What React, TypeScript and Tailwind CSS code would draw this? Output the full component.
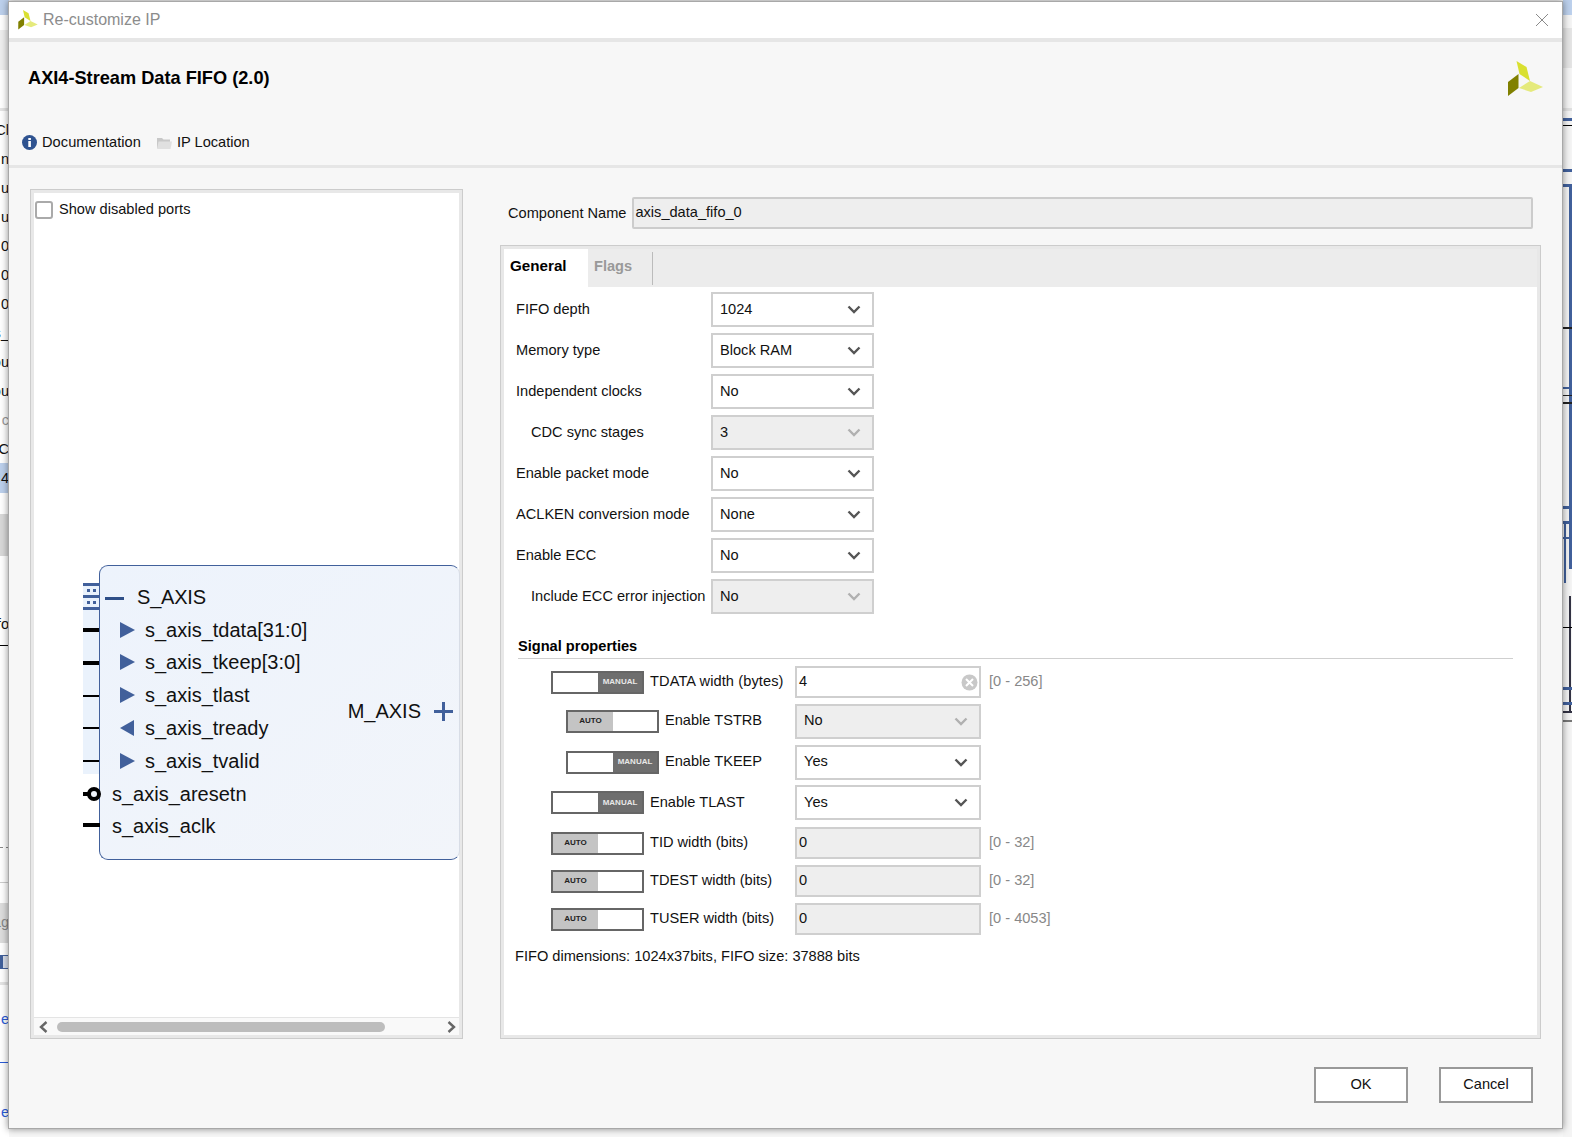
const font = "font-['Liberation_Sans',Arial,sans-serif]";

const XilinxLogo = ({ className }: { className: string }) => (
  <svg viewBox="0 0 35 36" className={className}>
    <polygon points="8.5,0 18.5,6 22,20 11.5,13" fill="#d9e030" />
    <polygon points="0,21 10.5,13 10.5,27 0,35" fill="#808000" />
    <polygon points="11,27 22,20 35,26 23,31" fill="#e5ea7c" />
  </svg>
);

const Chevron = ({ disabled }: { disabled?: boolean }) => (
  <svg width="14" height="9" viewBox="0 0 14 9" className="shrink-0">
    <path d="M1.5 1.5 L7 7 L12.5 1.5" fill="none" stroke={disabled ? "#b0b0b0" : "#555555"} strokeWidth="2.4" />
  </svg>
);

const Select = ({ value, disabled, className }: { value: string; disabled?: boolean; className: string }) => (
  <div
    className={`flex items-center justify-between border-2 border-[#cfcfcf] pl-[7px] pr-[11px] text-[14.6px] text-[#111] ${
      disabled ? "bg-[#eeeeee]" : "bg-white"
    } ${className}`}
  >
    <span>{value}</span>
    <Chevron disabled={disabled} />
  </div>
);

const Toggle = ({ manual }: { manual?: boolean }) => (
  <div className="flex h-[23px] w-[93px] shrink-0 border-2 border-[#666666] bg-white">
    {manual ? (
      <>
        <div className="w-[45px]" />
        <div className="flex flex-1 items-center justify-center bg-[#6e6e6e] text-[8px] font-bold text-[#e8e8e8]">MANUAL</div>
      </>
    ) : (
      <>
        <div className="flex w-[45px] items-center justify-center bg-[#c4c4c4] text-[8px] font-bold text-[#222]">AUTO</div>
        <div className="flex-1" />
      </>
    )}
  </div>
);

const topRows = [
  { label: "FIFO depth", value: "1024" },
  { label: "Memory type", value: "Block RAM" },
  { label: "Independent clocks", value: "No" },
  { label: "CDC sync stages", value: "3", disabled: true, indent: true },
  { label: "Enable packet mode", value: "No" },
  { label: "ACLKEN conversion mode", value: "None" },
  { label: "Enable ECC", value: "No" },
  { label: "Include ECC error injection", value: "No", disabled: true, indent: true },
];

const ports = [
  { name: "s_axis_tdata[31:0]", pin: "h-[4px]", dir: "right" },
  { name: "s_axis_tkeep[3:0]", pin: "h-[4px]", dir: "right" },
  { name: "s_axis_tlast", pin: "h-[2px]", dir: "right" },
  { name: "s_axis_tready", pin: "h-[2px]", dir: "left" },
  { name: "s_axis_tvalid", pin: "h-[2px]", dir: "right" },
];

const Arrow = ({ dir }: { dir: string }) => (
  <svg width="15" height="16" viewBox="0 0 15 16" className="shrink-0">
    <polygon points={dir === "right" ? "0,0 15,8 0,16" : "14,0 14,16 0,8"} fill="#41609b" />
  </svg>
);

const BlockDiagram = () => (
  <div className="absolute left-[49px] top-[372px] h-[295px] w-[377px]">
    {/* bus highlight and pins stick out on the left of the block */}
    <div className="absolute left-0 top-[18px] h-[191px] w-[17px] bg-[#eaf2fc]" />
    <div className="absolute left-0 top-[18px] flex h-[27px] w-[17px] flex-col justify-between">
      <div className="h-[3px] bg-[#41609b]" />
      <div className="flex justify-around px-[2px]"><span className="size-[3px] bg-[#41609b]" /><span className="size-[3px] bg-[#41609b]" /></div>
      <div className="h-[3px] bg-[#41609b]" />
      <div className="flex justify-around px-[2px]"><span className="size-[3px] bg-[#41609b]" /><span className="size-[3px] bg-[#41609b]" /></div>
      <div className="h-[3px] bg-[#41609b]" />
    </div>
    {ports.map((p, i) => (
      <div key={p.name} className={`absolute left-0 w-[17px] -translate-y-1/2 bg-black ${p.pin}`} style={{ top: 65 + i * 32.8 }} />
    ))}
    <div className="absolute left-0 top-[227px] h-[4px] w-[8px] bg-black" />

    <div className="absolute inset-y-0 left-[16px] right-0 rounded-[9px] border border-[#41609b] border-r-[#d8dde6] bg-gradient-to-br from-[#edf3fc] to-[#f2f5fa] text-[20px] leading-none text-[#111]">
      <div className="absolute left-[5px] top-[31px] h-[3px] w-[19px] bg-[#2f4f88]" />
      <div className="pl-[37px] pt-[21px] tracking-[-0.2px]">S_AXIS</div>
      <div className="mt-[12.6px] flex flex-col gap-[12.8px] pl-[20px]">
        {ports.map((p) => (
          <div key={p.name} className="flex h-[20px] items-center gap-[10px]">
            <Arrow dir={p.dir} />
            <span>{p.name}</span>
          </div>
        ))}
      </div>
      <div className="mt-[12.8px] flex flex-col gap-[12.6px] pl-[12px]">
        <div className="h-[20px]">s_axis_aresetn</div>
        <div className="h-[20px]">s_axis_aclk</div>
      </div>
      <div className="absolute right-[6px] top-[135px] flex items-center gap-[13px]">
        <span>M_AXIS</span>
        <svg width="19" height="19" viewBox="0 0 19 19"><path d="M9.5 0V19M0 9.5H19" stroke="#41609b" strokeWidth="3" /></svg>
      </div>
    </div>
    <div className="absolute left-[4px] top-[222px] z-10 size-[14px] rounded-full border-[4px] border-black bg-[#eff4fb]" />
    <div className="absolute left-0 top-[258px] h-[4px] w-[17px] bg-black" />
  </div>
);

const leftBits = [
  { t: "Cl", y: 122 }, { t: "n", y: 151 }, { t: "u", y: 180 }, { t: "u", y: 209 }, { t: "0", y: 238 },
  { t: "0", y: 267 }, { t: "0", y: 296 }, { t: "s_", y: 325 }, { t: "ou", y: 354 }, { t: "ou", y: 383 },
  { t: "C", y: 441 }, { t: "I4", y: 470 }, { t: "fo", y: 616 },
];

const rightLines = [
  { y: 118, c: "bg-[#41609b] h-[3px]" }, { y: 125, c: "bg-black h-px" }, { y: 169, c: "bg-[#41609b] h-[3px]" },
  { y: 184, c: "bg-[#41609b] h-[3px]" }, { y: 327, c: "bg-[#222] h-[2px]" }, { y: 387, c: "bg-[#41609b] h-[2px]" },
  { y: 395, c: "bg-[#222] h-px" }, { y: 402, c: "bg-[#222] h-[2px]" }, { y: 506, c: "bg-[#41609b] h-[3px]" },
  { y: 521, c: "bg-[#41609b] h-[3px]" }, { y: 537, c: "bg-[#41609b] h-[2px]" }, { y: 627, c: "bg-black h-px" },
  { y: 687, c: "bg-[#41609b] h-[3px]" }, { y: 702, c: "bg-[#41609b] h-[3px]" }, { y: 711, c: "bg-[#334] h-[2px]" },
  { y: 720, c: "bg-[#777] h-[2px]" },
];

export default function App() {
  return (
    <div className={`relative h-[1137px] w-[1572px] overflow-hidden bg-[#f7f7f7] text-[14.6px] text-[#111] ${font}`}>
      {/* main window peeking out behind the dialog */}
      <div className="absolute inset-y-0 left-0 w-[9px] overflow-hidden bg-white">
        <div className="absolute left-0 top-0 h-[15px] w-full bg-[#bcd0ec]" />
        <div className="absolute left-0 top-[30px] h-[40px] w-full bg-[#eeeeee]" />
        <div className="absolute left-0 top-[108px] h-[3px] w-full bg-[#e4e4e4]" />
        <div className="absolute left-0 top-[463px] h-[30px] w-full bg-[#bcd0ec]" />
        <div className="absolute left-0 top-[514px] h-[42px] w-full bg-[#d8d8d8]" />
        <div className="absolute left-0 top-[645px] h-px w-full bg-black" />
        <div className="absolute left-0 top-[847px] w-full border-t border-dashed border-[#888]" />
        <div className="absolute left-0 top-[882px] h-px w-full bg-[#ccc]" />
        <div className="absolute left-0 top-[903px] h-[40px] w-full bg-[#dddddd]" />
        <div className="absolute left-0 top-[955px] h-[14px] w-[2px] bg-[#41609b]" />
        <div className="absolute left-[2px] top-[955px] h-[14px] w-[7px] border border-[#41609b] bg-[#d8deea]" />
        <div className="absolute left-0 top-[982px] h-[3px] w-full bg-[#e4e4e4]" />
        <div className="absolute left-0 top-[1062px] h-px w-full bg-[#2a5bd7]" />
        {leftBits.map((b) => (
          <span key={b.y} className="absolute right-0 leading-[17px]" style={{ top: b.y }}>{b.t}</span>
        ))}
        <span className="absolute right-0 top-[412px] leading-[17px] text-[#999]">c</span>
        <span className="absolute right-0 top-[914px] leading-[17px] text-[#888]">ag</span>
        <span className="absolute right-0 top-[1011px] leading-[17px] text-[#2a5bd7]">e</span>
        <span className="absolute right-0 top-[1104px] leading-[17px] text-[#2a5bd7]">e</span>
      </div>
      <div className="absolute inset-y-0 right-0 w-[9px] overflow-hidden bg-[#f4f4f4]">
        <div className="absolute left-0 top-0 h-[15px] w-full bg-[#bcd0ec]" />
        <div className="absolute left-0 top-[28px] h-[40px] w-full bg-[#e4e4e4]" />
        <div className="absolute left-0 top-[108px] h-[3px] w-full bg-[#e0e0e0]" />
        <div className="absolute left-[6px] top-[184px] h-[385px] w-[3px] bg-[#41609b]" />
        <div className="absolute left-[1px] top-[521px] h-[62px] w-[2px] bg-[#41609b]" />
        <div className="absolute left-[6px] top-[596px] h-[115px] w-[2px] bg-[#334]" />
        {rightLines.map((l) => (
          <div key={l.y} className={`absolute left-0 w-full ${l.c}`} style={{ top: l.y }} />
        ))}
      </div>

      {/* dialog */}
      <div className="absolute left-[8px] top-px flex h-[1128px] w-[1555px] flex-col border border-[#a8a8a8] bg-[#f7f7f7] shadow-[0_0_7px_rgba(0,0,0,0.45)]">
        <div className="flex h-[36px] shrink-0 items-center justify-between bg-white pl-[9px] pr-[13px]">
          <div className="flex items-center gap-[5px]">
            <XilinxLogo className="h-[20px] w-[20px]" />
            <span className="text-[16px] text-[#8c8c8c]">Re-customize IP</span>
          </div>
          <svg width="14" height="14" viewBox="0 0 14 14"><path d="M1 1L13 13M13 1L1 13" stroke="#8a8a8a" strokeWidth="1" /></svg>
        </div>
        <div className="h-[4px] shrink-0 bg-[#e6e6e6]" />

        <div className="flex h-[123px] shrink-0 flex-col pl-[19px] pr-[19px]">
          <div className="flex items-start justify-between">
            <h1 className="mt-[26px] text-[18.2px] font-bold leading-[20px] text-black">AXI4-Stream Data FIFO (2.0)</h1>
            <XilinxLogo className="mt-[19px] h-[36px] w-[35px]" />
          </div>
          <div className="mt-[35px] flex items-center">
            <svg width="15" height="15" viewBox="0 0 15 15" className="ml-[-6px] mr-[5px]">
              <circle cx="7.5" cy="7.5" r="7.5" fill="#2f5390" />
              <rect x="6.3" y="6" width="2.6" height="6" fill="#fff" />
              <rect x="6.3" y="3" width="2.6" height="2" fill="#fff" />
            </svg>
            <span className="tracking-[0.06px]">Documentation</span>
            <svg width="15" height="13" viewBox="0 0 15 13" className="ml-[16px] mr-[5px]">
              <path d="M0 2H5L6.5 3.5H13V12H0Z" fill="#c8c8c8" />
              <path d="M1.5 5.5H15L13.5 13H0Z" fill="#e0e0e0" />
            </svg>
            <span>IP Location</span>
          </div>
        </div>
        <div className="h-[3px] shrink-0 bg-[#e6e6e6]" />

        <div className="flex min-h-0 flex-1 pl-[21px] pr-[21px] pt-[21px]">
          {/* left symbol panel */}
          <div className="relative flex h-[850px] w-[433px] shrink-0 flex-col border border-[#cccccc] bg-[#e8e8e8] p-[3px]">
            <div className="relative flex-1 bg-white">
              <div className="flex items-center gap-[6px] pl-[1px] pt-[6px]">
                <div className="size-[18px] rounded-[3px] border-2 border-[#aaaaaa] bg-white" />
                <span>Show disabled ports</span>
              </div>
              <BlockDiagram />
            </div>
            <div className="flex h-[18px] shrink-0 items-center justify-between border-t border-[#e4e4e4] bg-[#f9f9f9] pl-[5px] pr-[3px]">
              <svg width="9" height="12" viewBox="0 0 9 12"><path d="M7.5 1L2 6L7.5 11" fill="none" stroke="#666" strokeWidth="2.4" /></svg>
              <div className="ml-[9px] mr-auto h-[10px] w-[328px] rounded-full bg-[#bdbdbd]" />
              <svg width="9" height="12" viewBox="0 0 9 12"><path d="M1.5 1L7 6L1.5 11" fill="none" stroke="#666" strokeWidth="2.4" /></svg>
            </div>
          </div>

          {/* right config panel */}
          <div className="ml-[37px] flex h-[850px] flex-1 flex-col">
            <div className="flex h-[56px] shrink-0 items-start pl-[8px] pr-[8px] pt-[8px]">
              <span className="mr-[6px] mt-[6px]">Component Name</span>
              <div className="flex h-[32px] flex-1 items-center rounded-[2px] border-2 border-[#cccccc] bg-[#eeeeee] pl-px">axis_data_fifo_0</div>
            </div>
            <div className="flex min-h-0 flex-1 flex-col border border-[#cccccc] bg-[#e8e8e8] p-[3px]">
              <div className="flex h-[38px] shrink-0 bg-[#ececec] font-bold">
                <div className="flex w-[84px] items-center bg-white pb-[3px] pl-[6px] text-[15.2px] text-black">General</div>
                <div className="mb-[2px] mt-[3px] flex w-[65px] items-center border-r border-[#bbbbbb] pb-[4px] pl-[6px] text-[#999999]">Flags</div>
              </div>
              <div className="flex-1 bg-white pt-[5px]">
                <div className="flex flex-col gap-[6px] pl-[12px]">
                  {topRows.map((r) => (
                    <div key={r.label} className="flex h-[35px] items-center">
                      <span className={`w-[195px] ${r.indent ? "pl-[15px]" : ""}`}>{r.label}</span>
                      <Select value={r.value} disabled={r.disabled} className="h-[35px] w-[163px]" />
                    </div>
                  ))}
                </div>

                <div className="ml-[14px] mr-[24px] mt-[24px] border-b border-[#cfcfcf] pb-[3px] font-bold leading-[17px] text-black">Signal properties</div>

                <div className="mt-[7px] flex flex-col pl-[47px]">
                  <div className="flex h-[32px] items-center">
                    <Toggle manual />
                    <span className="ml-[6px] w-[145px] tracking-[0.1px]">TDATA width (bytes)</span>
                    <div className="flex h-[32px] w-[186px] items-center justify-between border-2 border-[#cfcfcf] bg-white pl-[2px] pr-px">
                      <span>4</span>
                      <svg width="17" height="17" viewBox="0 0 17 17">
                        <circle cx="8.5" cy="8.5" r="8" fill="#c8c8c8" />
                        <path d="M5 5L12 12M12 5L5 12" stroke="#fff" strokeWidth="2" />
                      </svg>
                    </div>
                    <span className="ml-[8px] text-[#888888]">[0 - 256]</span>
                  </div>
                  <div className="mt-[6px] flex h-[34px] items-center">
                    <div className="ml-[15px]"><Toggle /></div>
                    <span className="ml-[6px] w-[130px]">Enable TSTRB</span>
                    <Select value="No" disabled className="h-[35px] w-[186px]" />
                  </div>
                  <div className="mt-[7px] flex h-[34px] items-center">
                    <div className="ml-[15px]"><Toggle manual /></div>
                    <span className="ml-[6px] w-[130px]">Enable TKEEP</span>
                    <Select value="Yes" className="h-[35px] w-[186px]" />
                  </div>
                  <div className="mt-[6px] flex h-[35px] items-center">
                    <Toggle manual />
                    <span className="ml-[6px] w-[145px]">Enable TLAST</span>
                    <Select value="Yes" className="h-[35px] w-[186px]" />
                  </div>
                  {[
                    { label: "TID width (bits)", range: "[0 - 32]", top: "mt-[7px]" },
                    { label: "TDEST width (bits)", range: "[0 - 32]", top: "mt-[6px]" },
                    { label: "TUSER width (bits)", range: "[0 - 4053]", top: "mt-[6px]" },
                  ].map((r) => (
                    <div key={r.label} className={`flex h-[32px] items-center ${r.top}`}>
                      <Toggle />
                      <span className="ml-[6px] w-[145px]">{r.label}</span>
                      <div className="flex h-[32px] w-[186px] items-center border-2 border-[#cfcfcf] bg-[#eeeeee] pl-[2px]">0</div>
                      <span className="ml-[8px] text-[#888888]">{r.range}</span>
                    </div>
                  ))}
                </div>

                <div className="mt-[11px] pl-[11px]">FIFO dimensions: 1024x37bits, FIFO size: 37888 bits</div>
              </div>
            </div>
          </div>
        </div>

        <div className="flex h-[90px] shrink-0 items-start justify-end gap-[31px] pr-[29px] pt-[29px]">
          <button className="h-[36px] w-[94px] border-2 border-[#999999] bg-white">OK</button>
          <button className="h-[36px] w-[94px] border-2 border-[#999999] bg-white">Cancel</button>
        </div>
      </div>
    </div>
  );
}
